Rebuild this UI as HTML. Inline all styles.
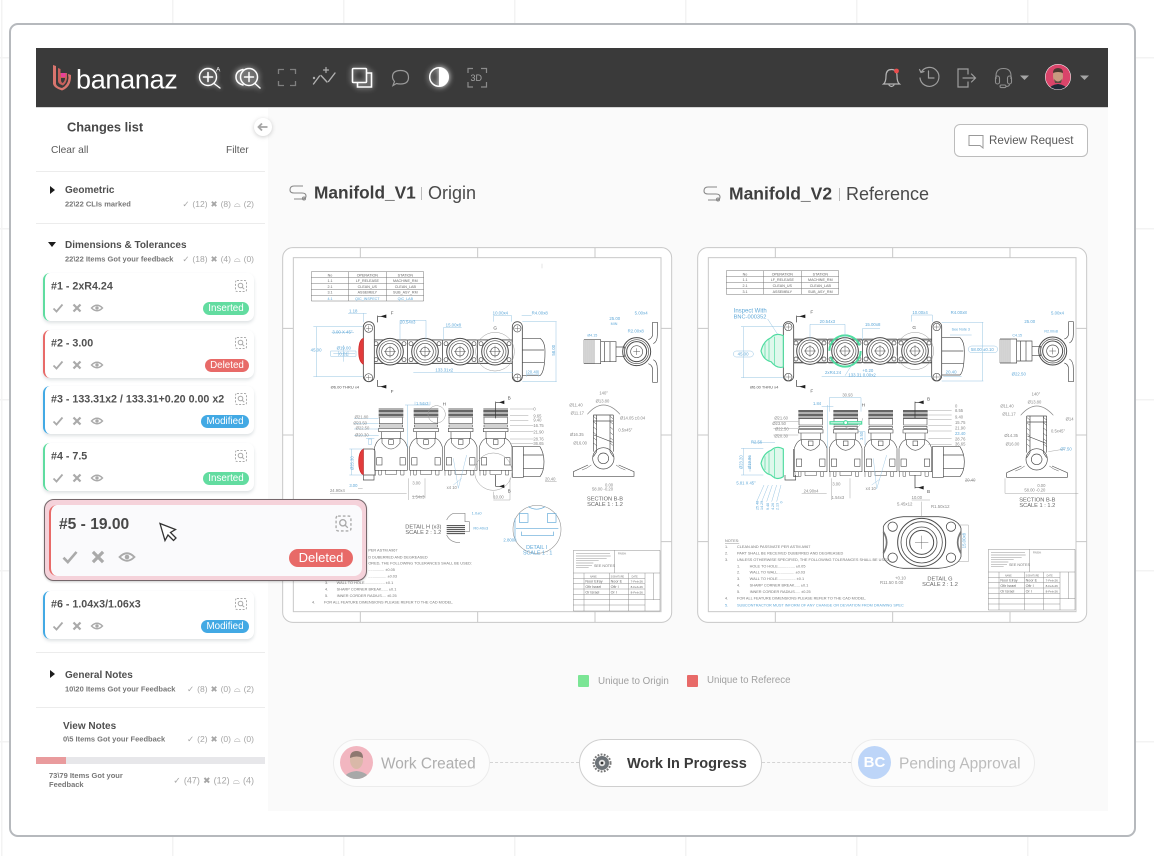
<!DOCTYPE html>
<html lang="en">
<head>
<meta charset="utf-8">
<title>bananaz</title>
<style>
*{box-sizing:border-box}
html,body{margin:0;padding:0}
body{width:1154px;height:856px;position:relative;overflow:hidden;font-family:"Liberation Sans",sans-serif;color:#3c3c3c;background-color:#fff}
.grid{position:absolute;inset:0;background-image:linear-gradient(90deg,#f3f3f3 1.5px,transparent 1.5px),linear-gradient(#f3f3f3 1.5px,transparent 1.5px);background-size:171px 171px;background-position:1px 57px}
.frame{position:absolute;left:9px;top:23px;width:1127px;height:814px;border:2px solid #b6b9bd;border-radius:9px;background:#fff}
.hdr{position:absolute;left:36px;top:48px;width:1072px;height:59px;background:#3a3a3a}
.main{position:absolute;left:36px;top:107px;width:1072px;height:704px;background:#fafafa;border-top:1px solid #d5d5d5}
.side{position:absolute;left:36px;top:108px;width:232px;height:703px;background:#fff}
.t{position:absolute;transform:translateY(-50%);white-space:nowrap;line-height:1}
.hr{position:absolute;left:36px;width:229px;height:1px;background:#ececec}
.h{font-size:10px;font-weight:bold;color:#4f4f4f;margin-top:1px}
.s{font-size:7.5px;font-weight:bold;color:#777}
.st{font-size:8.5px;color:#a6a6a6;text-align:right;word-spacing:.6px}
.tri{position:absolute;width:0;height:0}
.tri.r{border-left:5px solid #1c1c1c;border-top:4px solid transparent;border-bottom:4px solid transparent}
.tri.d{border-top:5px solid #1c1c1c;border-left:4.5px solid transparent;border-right:4.5px solid transparent}
.card{position:absolute;left:43px;width:211px;height:48px;background:#fff;border-left:2px solid;border-radius:7px;box-shadow:0 2px 3px rgba(90,110,120,.2)}
.card .n{position:absolute;left:6px;top:13.5px;transform:translateY(-50%);font-size:10.7px;font-weight:bold;color:#505050;white-space:nowrap;line-height:1}
.card svg{position:absolute;left:0;top:0}
.b{position:absolute;right:5px;top:29px;height:13px;border-radius:7px;color:#fff;font-size:9.8px;line-height:13px;text-align:center}
.g{border-color:#5fdca0}.g .b{background:#62dca0;width:46px}
.r{border-color:#e86a68}.r .b{background:#e86a68;width:44px}
.m{border-color:#42a9e4}.m .b{background:#42a9e4;width:48px}
.big{position:absolute;left:44px;top:499px;width:323px;height:82px;background:#f5d2da;border:1px solid #75676b;border-radius:10px;box-shadow:0 1px 2px rgba(0,0,0,.2)}
.big .in{position:absolute;left:4px;top:5px;width:313px;height:71px;background:#fafafc;border-left:2px solid #e86a68;border-radius:8px}
.pill{position:absolute;top:739px;height:48px;border-radius:24px;background:#fcfcfc;border:1px solid #ececec}
.dots{position:absolute;top:762px;height:0;border-top:1.5px dashed #d4d4d4}
.drawing{position:absolute;width:395px;height:380px;filter:blur(.3px)}
.drawing text{font-family:"Liberation Sans",sans-serif}
</style>
</head>
<body>
<div class="grid"></div>
<div class="frame"></div>
<div class="main"></div>
<div class="hdr"></div>
<div class="side"></div>

<svg width="0" height="0" style="position:absolute">
<defs>
<g id="port" fill="none" stroke="#4c4c4c" stroke-width="2">
<rect x="-52" y="-36" width="104" height="72" rx="4" stroke="#6c6c6c"/>
<circle cx="-42" cy="-24" r="6"/><circle cx="42" cy="-24" r="6"/><circle cx="-42" cy="24" r="6"/><circle cx="42" cy="24" r="6"/>
<circle r="40" fill="#fff" stroke-width="3"/><circle r="33"/><circle r="25"/><circle r="13"/>
<path d="M-18 0H18M0-18V18" stroke-width="1.4"/>
</g>
<g id="tower" fill="none" stroke="#4c4c4c" stroke-width="1.8">
<path d="M0 2H74M0 6H74M0 10H74M0 14H74M0 18H74M0 22H74M0 26H74" stroke="#333" stroke-width="2.2"/>
<path d="M2 28V46H72V28M2 50H72V56H2ZM0 60H74V70H0ZM8 70V90M66 70V90"/>
<path d="M-12 116Q-4 92 10 90H64Q78 92 86 116"/>
<path d="M10 90V104Q37 140 64 104V90"/>
<rect x="30" y="94" width="14" height="14"/>
<path d="M-12 116V186H86V116"/>
<rect x="-6" y="148" width="16" height="22"/><rect x="64" y="148" width="16" height="22"/>
<path d="M-10 186V202M0 186V200H8V186M20 186V198H54V186M66 186V200H76V186" stroke-width="1.5"/>
</g>
<g id="sec" fill="none" stroke="#4c4c4c" stroke-width="2">
<path d="M-48 38Q0 -18 50 38" stroke="#888"/>
<path d="M-30 40V150M30 40V150M-20 40V150M20 40V150M-30 40H30M-30 58H30M-28 100L28 122M-20 150L-30 165M20 150L30 165"/>
<path d="M-30 44L-20 52M-30 60L-20 68M-30 76L-20 84M-30 92L-20 100M-30 108L-20 116M-30 124L-20 132M20 44L30 52M20 60L30 68M20 76L30 84M20 92L30 100M20 108L30 116M20 124L30 132" stroke-width="1.4"/>
<circle cx="0" cy="170" r="32"/><circle cx="0" cy="170" r="16"/>
<path d="M-90 210V224H92V210L46 190M-90 210L-46 190"/>
<path d="M-64 205Q-48 200 -36 190M66 205Q50 200 38 190" stroke-width="1.4"/>
</g>
<g id="side" fill="none" stroke="#4c4c4c" stroke-width="2">
<path d="M-158 -36V36M-152 -36V36M-146 -36V36M-140 -36V36M-134 -36V36M-128 -36V36" stroke="#444" stroke-width="1.4"/>
<path d="M-158 -36H-108V36H-158M-108 -30H-62V30H-108M-96 -30V30M-80 -30V30M-62 -14H-36V14H-62"/>
<circle r="42" stroke-width="3"/><circle r="36"/><circle r="30" stroke-width="3"/><circle r="18"/>
<path d="M-10 0H10M0-10V10" stroke-width="1.4"/>
<path d="M35 -36Q48 -40 48 -54V-88H62V-50Q62 -30 50 -24M35 36Q48 40 48 56V92H62V52Q62 30 50 24"/>
</g>
<g id="tb" fill="none" stroke="#888" stroke-width="1.4">
<path d="M0 0H260V182H0ZM0 68H260M124 0V68M0 84H215M0 100H215M0 116H215M0 132H215M0 148H260M0 164H215M32 68V182M108 68V182M165 68V182M215 68V182M240 68V148"/>
<path d="M8 10H110M8 17H112M8 24H100M8 31H76M8 38H60M8 45H56M8 52H46" stroke="#aaa" stroke-width="2"/>
<text x="62" y="50" font-size="11" fill="#777" stroke="none">SEE NOTES</text>
<text x="134" y="12" font-size="7" fill="#777" stroke="none">FINISH:</text>
<text x="50" y="81" font-size="7" fill="#777" stroke="none">NAME</text>
<text x="112" y="81" font-size="7" fill="#777" stroke="none">SIGNATURE</text>
<text x="175" y="81" font-size="7" fill="#777" stroke="none">DATE</text>
<text x="36" y="97" font-size="11" fill="#666" stroke="none">Noor Elray</text>
<text x="112" y="97" font-size="11" fill="#666" stroke="none">Noor E</text>
<text x="172" y="97" font-size="9" fill="#666" stroke="none">7-Feb-26</text>
<text x="36" y="113" font-size="11" fill="#666" stroke="none">Ofir Israel</text>
<text x="112" y="113" font-size="11" fill="#666" stroke="none">Ofir I</text>
<text x="172" y="113" font-size="9" fill="#666" stroke="none">8-Feb-26</text>
<text x="36" y="129" font-size="11" fill="#666" stroke="none">Or Israel</text>
<text x="112" y="129" font-size="11" fill="#666" stroke="none">Or I</text>
<text x="172" y="129" font-size="9" fill="#666" stroke="none">8-Feb-26</text>
</g>
<g id="fr" fill="none" stroke="#c8c8c8">
<rect x="8" y="8" width="1167" height="1124" rx="30" fill="#fff" stroke-width="3"/>
<rect x="40" y="38" width="1103" height="1062" stroke-width="3"/>
<path d="M241 8V38M593 8V38M945 8V38M241 1100V1132M593 1100V1132M945 1100V1132M8 250H40M8 570H40M8 890H40M1143 250H1175M1143 570H1175M1143 890H1175" stroke-width="3"/>
</g>
<g id="chk"><path d="M-4.5 .5L-1.5 3.5L4.5-3.5" fill="none" stroke="#aaa" stroke-width="1.8"/></g>
<g id="cross"><path d="M-3.5-3.5L3.5 3.5M3.5-3.5L-3.5 3.5" fill="none" stroke="#aaa" stroke-width="2.2"/></g>
<g id="eye" fill="none" stroke="#aaa"><path d="M-5.5 0Q0-5.5 5.5 0Q0 5.5 -5.5 0Z" stroke-width="1.4"/><circle r="1.7" fill="#aaa" stroke="none"/></g>
<g id="sr" fill="none" stroke="#aaa"><rect x="-5.5" y="-5.5" width="11" height="11" rx="1.5" stroke-dasharray="2 1.5"/><circle cx="-.5" cy="-.5" r="2.3"/><path d="M1.2 1.2L3.2 3.2"/></g>
</defs>
</svg>

<!-- HEADER CONTENT -->
<svg style="position:absolute;left:0;top:0;filter:blur(.3px)" width="1154" height="110" viewBox="0 0 1154 110" fill="none">
<!-- logo -->
<path d="M53 65L56 66V84Q57 87 62 88Q68 85 68.5 78L68 74L71 75Q71.5 87 62 90.5Q54 88 53 84Z" fill="#d9756e"/>
<path d="M58 68L60.5 69V73H67V78Q66.5 83 63 85.5Q58 84 58 81Z" fill="#c9605c"/>
<rect x="61" y="73" width="4.5" height="4" fill="#e8409a"/>
<path d="M61 78H65V79Q64.5 81.5 62.5 83Q61 82 61 80Z" fill="#3a3a3a"/>
<!-- zoom A -->
<g stroke="#fff" stroke-width="1.4" stroke-linecap="round" style="filter:drop-shadow(0 0 2px rgba(255,255,255,.7))">
<circle cx="208" cy="77" r="8.5"/><path d="M203.5 77H212.5M208 72.5V81.5" stroke-width="1.6"/><path d="M214 83.5L220 88"/>
</g>
<text x="216" y="71.5" font-size="6.5" fill="#fff" font-family="Liberation Sans">A</text>
<!-- zoom double -->
<g stroke="#fff" stroke-width="1.5" stroke-linecap="round" style="filter:drop-shadow(0 0 3px #fff)">
<circle cx="249" cy="77" r="8.5"/><path d="M244.5 77H253.5M249 72.5V81.5"/><path d="M255 83.5L260 88"/>
<path d="M243 69.5Q236 71 236 77Q236 83 243 85"/>
</g>
<!-- fullscreen -->
<path d="M278.5 74V69.5H284M290 69.5H295.5V74M278.5 81V85.5H284M290 85.5H295.5V81" stroke="#808080" stroke-width="1.3"/>
<!-- graph -->
<g stroke="#b0b0b0" stroke-width="1.4" stroke-linecap="round">
<path d="M313.5 84L319.5 76M321 75.5L327 82M328.5 81.5L335 73"/>
<path d="M323.5 70H328.5M326 67.5V72.5" stroke-width="1.2"/>
<circle cx="314" cy="78" r=".5"/>
</g>
<!-- layers -->
<g stroke="#fff" stroke-width="1.6" style="filter:drop-shadow(0 0 3px rgba(255,255,255,.8))">
<rect x="352.5" y="68.5" width="14" height="14" rx="1"/>
<path d="M366.5 73H371.5V87H357.5V82.5"/>
</g>
<!-- bubble -->
<path d="M393 85.5L394.5 81.5Q392.5 79 392.5 77Q392.5 70.5 400.5 70.5Q408.5 70.5 408.5 77.5Q408.5 84 400.5 84Q398 84 396.5 83.5Z" stroke="#9a9a9a" stroke-width="1.2"/>
<!-- contrast -->
<g style="filter:drop-shadow(0 0 3px #fff)">
<circle cx="439" cy="77" r="9.3" stroke="#fff" stroke-width="1.5"/>
<path d="M439 67.7A9.3 9.3 0 0 1 439 86.3Z" fill="#fff"/>
</g>
<!-- 3D -->
<path d="M468 73V68.5H473M481 68.5H486.5V73M468 82V87H473M481 87H486.5V82" stroke="#8c8c8c" stroke-width="1.2"/>
<text x="470.5" y="81" font-size="9" fill="#a5a5a5" font-family="Liberation Sans">3D</text>
<!-- bell -->
<g stroke="#b5b5b5" stroke-width="1.2" stroke-linecap="round">
<path d="M883.5 84Q886 82 886 76Q886 69.5 891.5 69.5Q897 69.5 897 76Q897 82 899.5 84Z"/>
<path d="M889 85Q891.5 88 894 85"/>
</g>
<circle cx="896.5" cy="71" r="2.4" fill="#ea4c4c"/>
<!-- clock -->
<g stroke="#9e9e9e" stroke-width="1.2" stroke-linecap="round">
<path d="M921 72.5A9.5 9.5 0 1 1 920 78M919.5 69.5L921 72.5L924 71.5"/>
<path d="M928.5 71V78H934"/>
</g>
<!-- exit -->
<g stroke="#9e9e9e" stroke-width="1.2" stroke-linecap="round">
<path d="M968 74V69H958V87H968V82"/>
<path d="M963 78H975M971.5 74L975.5 78L971.5 82"/>
</g>
<!-- headset -->
<g stroke="#909090" stroke-width="1.1">
<path d="M996 79V76Q996 68.5 1003.5 68.5Q1011 68.5 1011 76V79"/>
<rect x="995.5" y="76" width="4" height="8" rx="2"/><rect x="1007.5" y="76" width="4" height="8" rx="2"/>
<path d="M1009.5 84Q1009.5 86.5 1006 86.5"/><rect x="1000" y="85" width="6" height="2.6" rx="1.3"/>
</g>
<path d="M1020 75.5H1029L1024.5 80Z" fill="#a5a5a5"/>
<!-- avatar -->
<defs><clipPath id="av"><circle cx="1058" cy="77" r="12.5"/></clipPath></defs>
<circle cx="1058" cy="77" r="13" fill="#fff"/>
<g clip-path="url(#av)">
<rect x="1044" y="63" width="28" height="28" fill="#d9446a"/>
<path d="M1048 92Q1049 85 1058 84Q1067 85 1068 92Z" fill="#1f2a38"/>
<ellipse cx="1058" cy="76" rx="5" ry="7" fill="#c99a80"/>
<path d="M1053 73Q1053 68 1058 68Q1063 68 1063 73Q1058 71 1053 73Z" fill="#4a3a32"/>
<path d="M1054 79Q1058 84 1062 79L1061 83H1055Z" fill="#5a4a42"/>
</g>
<path d="M1080 75.5H1089L1084.5 80Z" fill="#a5a5a5"/>
</svg>
<div class="t" style="left:76px;top:79.5px;font-size:27px;letter-spacing:-.3px;color:#fff">bananaz</div>

<!-- SIDEBAR -->
<div class="t" style="left:67px;top:128px;font-size:12.8px;font-weight:bold;color:#474747">Changes list</div>
<div class="t" style="left:51px;top:151px;font-size:10.2px;color:#5a5a5a">Clear all</div>
<div class="t" style="left:226px;top:151px;font-size:10.2px;color:#5a5a5a">Filter</div>
<svg style="position:absolute;left:252px;top:116px;overflow:visible" width="22" height="22">
<circle cx="11" cy="11" r="9" fill="#fff" style="filter:drop-shadow(0 1px 2px rgba(0,0,0,.2))"/>
<path d="M6.5 11H15.5M10 7.5L6.5 11L10 14.5" stroke="#a5a5a5" stroke-width="1.8" fill="none"/>
</svg>

<div class="hr" style="top:171px"></div>
<div class="tri r" style="left:50px;top:186px"></div>
<div class="t h" style="left:65px;top:190px">Geometric</div>
<div class="t s" style="left:65px;top:204px">22\22 CLIs marked</div>
<div class="t st" style="right:900px;top:204px">✓ (12) ✖ (8) ⌓ (2)</div>

<div class="hr" style="top:223px"></div>
<div class="tri d" style="left:48px;top:242px"></div>
<div class="t h" style="left:65px;top:245px">Dimensions &amp; Tolerances</div>
<div class="t s" style="left:65px;top:259px">22\22 Items Got your feedback</div>
<div class="t st" style="right:900px;top:259px">✓ (18) ✖ (4) ⌓ (0)</div>

<div class="card g" style="top:273px"><div class="n">#1 - 2xR4.24</div><svg width="209" height="48"><use href="#sr" x="196" y="13"/><use href="#chk" x="13" y="35"/><use href="#cross" x="32" y="35"/><use href="#eye" x="52" y="35"/></svg><div class="b">Inserted</div></div>
<div class="card r" style="top:330px"><div class="n">#2 - 3.00</div><svg width="209" height="48"><use href="#sr" x="196" y="13"/><use href="#chk" x="13" y="35"/><use href="#cross" x="32" y="35"/><use href="#eye" x="52" y="35"/></svg><div class="b">Deleted</div></div>
<div class="card m" style="top:386px"><div class="n">#3 - 133.31x2 / 133.31+0.20 0.00 x2</div><svg width="209" height="48"><use href="#sr" x="196" y="13"/><use href="#chk" x="13" y="35"/><use href="#cross" x="32" y="35"/><use href="#eye" x="52" y="35"/></svg><div class="b">Modified</div></div>
<div class="card g" style="top:443px"><div class="n">#4 - 7.5</div><svg width="209" height="48"><use href="#sr" x="196" y="13"/><use href="#chk" x="13" y="35"/><use href="#cross" x="32" y="35"/><use href="#eye" x="52" y="35"/></svg><div class="b">Inserted</div></div>
<div class="card m" style="top:591px"><div class="n">#6 - 1.04x3/1.06x3</div><svg width="209" height="48"><use href="#sr" x="196" y="13"/><use href="#chk" x="13" y="35"/><use href="#cross" x="32" y="35"/><use href="#eye" x="52" y="35"/></svg><div class="b">Modified</div></div>

<div class="hr" style="top:652px"></div>
<div class="tri r" style="left:50px;top:670px"></div>
<div class="t h" style="left:65px;top:675px">General Notes</div>
<div class="t s" style="left:65px;top:689px">10\20 Items Got your Feedback</div>
<div class="t st" style="right:900px;top:689px">✓ (8) ✖ (0) ⌓ (2)</div>
<div class="hr" style="top:707px"></div>
<div class="t h" style="left:63px;top:726px">View Notes</div>
<div class="t s" style="left:63px;top:739px">0\5 Items Got your Feedback</div>
<div class="t st" style="right:900px;top:739px">✓ (2) ✖ (0) ⌓ (0)</div>
<div style="position:absolute;left:36px;top:757px;width:229px;height:7px;background:#e7e7ea"></div>
<div style="position:absolute;left:36px;top:757px;width:30px;height:7px;background:#e99b9d"></div>
<div class="s" style="position:absolute;left:49px;top:771px;width:90px;line-height:9px">73\79 Items Got your Feedback</div>
<div class="t st" style="right:900px;top:781px;font-size:9px">✓ (47) ✖ (12) ⌓ (4)</div>

<!-- TITLES -->
<svg style="position:absolute;left:0;top:0" width="1154" height="230" fill="none" stroke="#888" stroke-width="1.1">
<path d="M303 186H294Q290 186 290 190Q290 193 294 193H302Q306 193 306 196Q306 199 302 199H294"/><circle cx="304" cy="198.5" r="1.5"/>
<path d="M717 187H708Q704 187 704 191Q704 194 708 194H716Q720 194 720 197Q720 200 716 200H708"/><circle cx="718" cy="199.5" r="1.5"/>
</svg>
<div class="t" style="left:314px;top:193px;font-size:17.3px;font-weight:bold;color:#3f3f3f">Manifold_V1</div>
<div style="position:absolute;left:421px;top:187px;width:1px;height:13px;background:#bbb"></div>
<div class="t" style="left:428px;top:193px;font-size:18px;color:#4a4a4a">Origin</div>
<div class="t" style="left:729px;top:194px;font-size:17.5px;font-weight:bold;color:#3f3f3f">Manifold_V2</div>
<div style="position:absolute;left:839px;top:188px;width:1px;height:13px;background:#bbb"></div>
<div class="t" style="left:846px;top:194px;font-size:18px;color:#4a4a4a">Reference</div>

<!-- Review button -->
<div style="position:absolute;left:954px;top:124px;width:134px;height:33px;background:#fff;border:1px solid #bcbcbc;border-radius:6px"></div>
<svg style="position:absolute;left:968px;top:134px" width="17" height="15" fill="none"><path d="M1 1.5H15V14L12 11.5H1Z" stroke="#9a9a9a" stroke-width="1"/></svg>
<div class="t" style="left:989px;top:141px;font-size:11.6px;color:#5a5a5a">Review Request</div>

<!-- DRAWING 1 -->
<svg class="drawing" style="left:280px;top:245px" viewBox="0 0 1185 1140">
<use href="#fr"/>
<g fill="none" stroke="#777" stroke-width="1.5">
<path d="M94 80H431V168H94ZM94 98H431M94 116H431M94 133H431M94 151H431M205 80V168M320 80V168"/>
<path d="M786 56V70" stroke="#ccc"/>
</g>
<g font-size="11" fill="#666" text-anchor="middle">
<text x="150" y="94">No</text><text x="262" y="94">OPERATION</text><text x="376" y="94">STATION</text>
<text x="150" y="111">1.1</text><text x="262" y="111">LF_RELEASE</text><text x="376" y="111">MACHINE_RM</text>
<text x="150" y="129">2.1</text><text x="262" y="129">CLEAN_US</text><text x="376" y="129">CLEAN_LAB</text>
<text x="150" y="146">3.1</text><text x="262" y="146">ASSEMBLY</text><text x="376" y="146">SUB_ASY_RM</text>
<g fill="#5fa8d8"><text x="150" y="165">4.1</text><text x="262" y="165">QIC_INSPECT</text><text x="376" y="165">QIC_LAB</text></g>
</g>
<!-- top view -->
<g fill="none" stroke="#4c4c4c" stroke-width="2">
<path d="M283 285H697M283 355H697" stroke-width="2.5"/>
<use href="#port" x="330" y="320"/><use href="#port" x="435" y="320"/><use href="#port" x="540" y="320"/><use href="#port" x="645" y="320"/>
<rect x="250" y="230" width="33" height="180" rx="16" stroke-width="2.5" fill="#fff"/>
<circle cx="266" cy="250" r="12"/><circle cx="266" cy="398" r="12"/><path d="M258 250H274M266 242V258M258 398H274M266 390V406" stroke-width="1.2"/>
<rect x="697" y="230" width="30" height="180" rx="15" stroke-width="2.5" fill="#fff"/>
<circle cx="712" cy="250" r="11"/><circle cx="712" cy="398" r="11"/><path d="M704 250H720M712 242V258M704 398H720M712 390V406" stroke-width="1.2"/>
<path d="M727 280H780Q795 290 795 320Q795 380 780 392H727M727 315H792M727 352H792"/>
<circle cx="645" cy="320" r="58" stroke="#999" stroke-width="1.5"/>
<path d="M250 280Q236 285 236 320Q236 350 250 358Z" fill="#e23b3b" stroke="#c22" />
<!-- section arrows -->
<path d="M293 212V232M293 214H318M293 425H318M293 425V405" stroke="#333"/>
<path d="M318 210L304 214L318 218ZM318 421L304 425L318 429Z" fill="#222" stroke="#222"/>
</g>
<g fill="none" stroke="#8fbfe0" stroke-width="1.4">
<path d="M110 245V395M100 245H248M100 395H248M204 205H260M250 205V232M155 262H222M160 325H225M190 300V350M152 318H228V334H152ZM176 318V334M204 318V334M360 226H438M360 226V285M438 226V285M490 248H545M490 248V285M640 212H695M640 212V230M695 212V230M727 230H830M727 410H830M828 230V410M400 382H700M740 388H775M740 376V395M775 376V395M725 212H755"/>
</g>
<g font-size="13" fill="#5fa8d8">
<text x="92" y="319">45.00</text><text x="207" y="203">1.18</text><text x="157" y="266">3.00 X 45°</text>
<text x="170" y="313">Ø19.00</text><text x="178" y="331">0.01</text><text x="360" y="236">20.54x3</text>
<text x="497" y="245">15.00x8</text><text x="638" y="209">10.00x4</text><text x="755" y="208">R4.00x8</text>
<text transform="translate(825 332) rotate(-90)">58.00</text><text x="466" y="379">133.31x2</text><text x="742" y="386">20.40</text>
</g>
<g font-size="14" fill="#555">
<text x="332" y="208">F</text><text x="332" y="444">F</text><text x="640" y="254">G</text><text x="152" y="431" font-size="12">Ø6.00 THRU x4</text>
</g>
<!-- side -->
<use href="#side" x="1070" y="320"/>
<g font-size="13" fill="#5fa8d8"><text x="988" y="225">25.00</text><text x="992" y="240" font-size="11">MIN</text><text x="1043" y="263">R2.00x8</text><text x="922" y="274" font-size="11">Ø4.15</text><text x="1064" y="208">5.00x4</text></g>
<!-- front view -->
<use href="#tower" x="296" y="490"/><use href="#tower" x="401" y="490"/><use href="#tower" x="505" y="490"/><use href="#tower" x="610" y="490"/>
<g fill="none" stroke="#4c4c4c" stroke-width="2">
<path d="M250 612H278Q285 612 285 620V690H250ZM697 605H730V697H697ZM730 605H780Q792 625 792 650Q792 680 780 695H730M730 630H790M730 670H790"/>
<path d="M250 612Q236 620 236 650Q236 682 250 690Z" fill="#e23b3b" stroke="#c22"/>
<path d="M250 690V705H282V690"/>
<circle cx="470" cy="508" r="26" stroke="#999" stroke-width="1.5"/><circle cx="640" cy="680" r="56" stroke="#999" stroke-width="1.5"/>
<path d="M647 470V520M647 725V690M647 472H672M647 724H672" stroke="#333"/>
<path d="M672 468L660 472L672 476ZM672 720L660 724L672 728Z" fill="#222" stroke="#222"/>
</g>
<g fill="none" stroke="#8fbfe0" stroke-width="1.4"><path d="M375 480H450M383 480V610M405 470V480M450 470V480M258 580H283M265 582H275V598H265ZM222 520H296M222 536H296M222 552H296M222 572H296M215 612V690M208 612H250M208 690H250"/></g>
<g fill="none" stroke="#999" stroke-width="1.3"><path d="M690 492H760M690 512H745M690 526H745M690 541H760M690 560H760M690 582H760M690 596H760M385 700V765M435 760V700M396 755H435M150 745H380M248 730H234M640 765H690M640 760V740M690 765V700M795 710H830"/></g>
<g font-size="12.5" fill="#888">
<text x="224" y="520">Ø21.80</text><text x="220" y="538">Ø23.50</text><text x="227" y="554">Ø22.50</text><text x="225" y="574">Ø20.30</text>
<text x="408" y="480" fill="#5fa8d8">1.54x3</text><text x="488" y="482" font-size="14" fill="#555">H</text>
<text x="760" y="497">0</text><text x="760" y="517">9.65</text><text x="760" y="530">9.40</text><text x="760" y="546">16.75</text><text x="760" y="565">21.90</text><text x="760" y="586">28.76</text><text x="760" y="600">36.65</text>
<text x="683" y="463" font-size="14" fill="#555">B</text><text x="683" y="742" font-size="14" fill="#555">B</text>
<text x="150" y="741">24.90x4</text><text x="208" y="726" fill="#5fa8d8">3.00</text><text x="397" y="719">3.00</text><text x="396" y="761">1.54x3</text><text x="640" y="761">10.00</text><text x="795" y="707">20.40</text><text x="500" y="732">x4 10</text>
<text transform="translate(220 675) rotate(-90)" fill="#5fa8d8">Ø25.30</text>
</g>
<path d="M520 640L535 730M560 630L535 730M520 720L545 700" fill="none" stroke="#8fbfe0" stroke-width="1.2"/>
<!-- section -->
<use href="#sec" x="970" y="470"/>
<g font-size="12.5" fill="#888"><text x="958" y="448">140°</text><text x="868" y="484">Ø11.40</text><text x="872" y="508">Ø11.17</text><text x="947" y="473">Ø13.80</text><text x="1020" y="524">Ø14.05 ±0.04</text><text x="1015" y="560">0.5x45°</text><text x="870" y="573">Ø16.35</text><text x="880" y="599">Ø16.00</text><text x="975" y="724">0.00</text><text x="936" y="736">58.00 -0.20</text></g>
<g font-size="17" fill="#666" text-anchor="middle"><text x="975" y="767">SECTION B-B</text><text x="975" y="783">SCALE 1 : 1.2</text>
<text x="430" y="851">DETAIL H (x3)</text><text x="430" y="867">SCALE 2 : 1.2</text></g>
<!-- detail H -->
<g fill="none" stroke="#555" stroke-width="2"><path d="M500 842H555M500 848H555M500 854H555M500 860H555M500 866H555" stroke="#444" stroke-width="3"/><path d="M525 805H555V830H568V860H555M500 825Q510 805 525 805M500 870Q510 893 540 893" stroke="#888"/></g>
<g font-size="12" fill="#5fa8d8"><text x="575" y="808">1.0±0</text><text x="580" y="853">R0.40x3</text></g>
<!-- detail I -->
<g fill="none" stroke="#5fa8d8" stroke-width="2"><circle cx="771" cy="853" r="72" stroke="#888" stroke-width="1.6"/><rect x="718" y="806" width="26" height="26"/><rect x="802" y="806" width="26" height="26"/><path d="M708 850H835M725 860V872H820V860M705 820V880M745 785Q770 800 795 785"/></g>
<text x="670" y="889" font-size="13" fill="#5fa8d8">2.8008</text>
<g font-size="16" fill="#5fa8d8" text-anchor="middle"><text x="770" y="912">DETAIL I</text><text x="773" y="928">SCALE 1 : 1</text></g>
<!-- notes -->
<g font-size="11.5" fill="#777"><text x="265" y="920">PER ASTM A967</text><text x="265" y="940">D DUBERRED AND DEGREASED</text><text x="265" y="959">ORED, THE FOLLOWING TOLERANCES SHALL BE USED:</text><text x="265" y="978">............... ±0.05</text><text x="265" y="998">................. ±0.03</text>
<text x="135" y="1017">3.</text><text x="170" y="1017">WALL TO HOLE................... ±0.1</text>
<text x="135" y="1036">4.</text><text x="170" y="1036">SHARP CORNER BREAK...... ±0.1</text>
<text x="135" y="1056">5.</text><text x="170" y="1056">INNER CORDER RADIUS.... ±0.25</text>
<text x="96" y="1075">4.</text><text x="132" y="1075">FOR ALL FEATURE DIMENSIONS PLEASE REFER TO THE CAD MODEL.</text></g>
<use href="#tb" x="880" y="916"/>
</svg>

<!-- DRAWING 2 -->
<svg class="drawing" style="left:695px;top:245px" viewBox="0 0 1185 1140">
<use href="#fr"/>
<g fill="none" stroke="#777" stroke-width="1.5"><path d="M94 77H431V148H94ZM94 95H431M94 113H431M94 131H431M205 77V148M320 77V148"/></g>
<g font-size="11" fill="#666" text-anchor="middle">
<text x="150" y="91">No</text><text x="262" y="91">OPERATION</text><text x="376" y="91">STATION</text>
<text x="150" y="108">1.1</text><text x="262" y="108">LF_RELEASE</text><text x="376" y="108">MACHINE_RM</text>
<text x="150" y="126">2.1</text><text x="262" y="126">CLEAN_US</text><text x="376" y="126">CLEAN_LAB</text>
<text x="150" y="144">3.1</text><text x="262" y="144">ASSEMBLY</text><text x="376" y="144">SUB_ASY_RM</text>
</g>
<g fill="none" stroke="#4c4c4c" stroke-width="2">
<path d="M296 285H712M296 352H712" stroke-width="2.5"/>
<use href="#port" x="345" y="318"/><use href="#port" x="450" y="318"/><use href="#port" x="555" y="318"/><use href="#port" x="660" y="318"/>
<circle cx="450" cy="318" r="47" stroke="#4fdca0" stroke-width="6" stroke-dasharray="130 18"/>
<rect x="265" y="230" width="31" height="178" rx="15" stroke-width="2.5" fill="#fff"/>
<circle cx="280" cy="246" r="11"/><circle cx="280" cy="396" r="11"/><path d="M272 246H288M280 238V254M272 396H288M280 388V404" stroke-width="1.2"/>
<rect x="710" y="230" width="30" height="178" rx="15" stroke-width="2.5" fill="#fff"/>
<circle cx="725" cy="246" r="11"/><circle cx="725" cy="396" r="11"/><path d="M717 246H733M725 238V254M717 396H733M725 388V404" stroke-width="1.2"/>
<path d="M740 278H795Q808 290 808 318Q808 378 795 390H740M740 318H805M740 355H805"/>
<circle cx="660" cy="318" r="56" stroke="#999" stroke-width="1.5"/>
<path d="M305 212V232M305 214H330M305 425H330M305 425V405" stroke="#333"/>
<path d="M330 210L316 214L330 218ZM330 421L316 425L330 429Z" fill="#222" stroke="#222"/>
</g>
<!-- green top -->
<g fill="#dff8ec" stroke="#4fdca0" stroke-width="3.5"><path d="M265 272Q242 262 228 278Q205 288 198 318Q205 345 228 350Q245 372 265 366Z"/><path d="M238 275V360M222 282V350M210 295V340" fill="none" stroke-width="2"/></g>
<g fill="none" stroke="#8fbfe0" stroke-width="1.4"><path d="M145 245V398M138 245H265M138 398H265M218 222L248 268M345 238H450M345 238V285M450 238V285M503 250H555M503 250V285M650 210H712M650 210V230M712 210V230M740 232H865M740 408H865M863 232V408M450 392L470 360M380 395H710M745 395H800M765 270H830"/><rect x="115" y="318" width="60" height="18" rx="9"/><rect x="820" y="303" width="88" height="20" rx="10"/></g>
<g font-size="13" fill="#5fa8d8">
<text x="116" y="203" font-size="18">Inspect With</text><text x="116" y="220" font-size="17">BNC-000352</text>
<text x="128" y="332">45.00</text><text x="374" y="234">20.54x3</text><text x="510" y="243">15.00x8</text><text x="652" y="207">10.00x4</text><text x="767" y="207">R4.00x8</text>
<text x="770" y="256" font-size="11">See Note 3</text><text x="828" y="318">58.00 ±0.10</text><text x="390" y="387">2xR4.24</text><text x="502" y="381">+0.20</text><text x="460" y="394">133.31  0.00x2</text><text x="752" y="385">20.40</text>
<text x="952" y="274" font-size="11">C4.15</text><text x="988" y="234">25.00</text><text x="1048" y="263" font-size="11">R2.00x8</text><text x="1068" y="208">5.00x4</text><text x="950" y="392">Ø22.50</text>
</g>
<g font-size="14" fill="#555"><text x="346" y="205">F</text><text x="346" y="442">F</text><text x="652" y="252">G</text><text x="165" y="430" font-size="12">Ø6.00 THRU x4</text></g>
<use href="#side" x="1073" y="318"/>
<!-- front -->
<use href="#tower" x="310" y="494"/><use href="#tower" x="415" y="494"/><use href="#tower" x="520" y="494"/><use href="#tower" x="624" y="494"/>
<g fill="none" stroke="#4c4c4c" stroke-width="2"><path d="M296 612V695H310M712 605H745V697H712ZM745 605H795Q808 625 808 650Q808 680 795 695H745M745 630H805M745 670H805"/><path d="M270 690V705H302V690"/><path d="M660 470V520M660 730V690M660 472H685M660 728H685" stroke="#333"/><path d="M685 468L672 472L685 476ZM685 724L672 728L685 732Z" fill="#222" stroke="#222"/><circle cx="470" cy="520" r="32" stroke="#999" stroke-width="1.5" stroke-dasharray="70 130"/></g>
<g fill="#dff8ec" stroke="#4fdca0" stroke-width="3.5"><path d="M265 612Q245 600 228 616Q205 625 198 655Q205 685 228 690Q245 708 265 695Z"/><path d="M238 612V700M222 622V688M210 634V675" fill="none" stroke-width="2"/><path d="M405 530H500V537H405Z"/><circle cx="452" cy="533" r="6" fill="#fff"/></g>
<g fill="none" stroke="#8fbfe0" stroke-width="1.4"><path d="M403 458H498M403 458V500M498 458V500M380 484H415M398 480V610M145 610V690M138 610H205M138 690H205M165 630V680M170 592H240M207 720L185 770M220 720L200 770M232 720L215 770M245 720L230 770M258 720L245 770M490 560H510V600"/></g>
<g fill="none" stroke="#999" stroke-width="1.3"><path d="M700 497H770M700 510H770M700 524H770M700 541H770M700 558H770M700 581H770M700 598H770M410 700V765M465 760V700M320 745H395M650 765H705M810 706H840M235 530H310M235 550H310M235 570H310M930 700V745H1150M1060 620L1110 612"/></g>
<g font-size="12.5" fill="#888">
<text x="238" y="523">Ø21.60</text><text x="232" y="540">Ø23.50</text><text x="240" y="556">Ø22.50</text><text x="238" y="577">Ø20.30</text>
<text x="442" y="454">30.93</text><text x="354" y="480" fill="#5fa8d8">1.84</text><text x="500" y="485" font-size="14" fill="#555">H</text>
<text x="780" y="488">0</text><text x="780" y="501">8.55</text><text x="780" y="520">9.40</text><text x="780" y="537">15.75</text><text x="780" y="554">21.90</text><text x="780" y="570" fill="#5fa8d8">23.40</text><text x="780" y="586">28.76</text><text x="780" y="601">36.65</text>
<text x="696" y="466" font-size="14" fill="#555">B</text><text x="696" y="744" font-size="14" fill="#555">B</text>
<text x="326" y="743">24.90x4</text><text x="412" y="721">3.00</text><text x="410" y="762">1.54x3</text><text x="650" y="762">10.00</text><text x="810" y="710">20.40</text><text x="512" y="735">x4 10</text>
<g fill="#5fa8d8"><text x="168" y="595">R2.56</text><text x="124" y="718">5.81 X 45°</text><text transform="translate(143 672) rotate(-90)">Ø23.20</text><text transform="translate(168 672) rotate(-90)">Ø19.96</text>
<text transform="translate(190 795) rotate(-90)" font-size="11">25.48</text><text transform="translate(204 795) rotate(-90)" font-size="11">14.29</text><text transform="translate(222 795) rotate(-90)" font-size="11">9.48</text><text transform="translate(237 795) rotate(-90)" font-size="11">4.26</text><text transform="translate(250 795) rotate(-90)" font-size="11">2.13</text><text transform="translate(263 775) rotate(-90)" font-size="11">0</text><text transform="translate(504 585) rotate(-90)">3.50</text></g>
</g>
<path d="M535 640L545 732M575 630L545 732M530 720L555 702" fill="none" stroke="#8fbfe0" stroke-width="1.2"/>
<use href="#sec" x="1025" y="473"/>
<g font-size="12.5" fill="#888"><text x="1010" y="451">140°</text><text x="916" y="487">Ø11.40</text><text x="922" y="511">Ø11.17</text><text x="998" y="476">Ø13.80</text><text x="1112" y="526">Ø14</text><text x="1068" y="563">0.5x45°</text><text x="928" y="576">Ø14.35</text><text x="932" y="602">Ø16.00</text><text x="1096" y="616" fill="#5fa8d8">Ø7.50</text><text x="1027" y="726">0.00</text><text x="988" y="739">58.00 -0.20</text></g>
<g font-size="17" fill="#666" text-anchor="middle"><text x="1027" y="770">SECTION B-B</text><text x="1027" y="786">SCALE 1 : 1.2</text><text x="735" y="1007">DETAIL G</text><text x="735" y="1023">SCALE 2 : 1.2</text></g>
<!-- detail G -->
<g fill="none" stroke="#4c4c4c" stroke-width="2.4">
<path d="M565 845Q575 820 625 815H730Q790 820 798 850V935Q790 965 730 970H625Q575 965 565 935Z"/>
<circle cx="680" cy="892" r="72" stroke-width="3"/><circle cx="680" cy="892" r="62"/><circle cx="680" cy="892" r="46"/><circle cx="680" cy="892" r="36" stroke-width="3"/>
<circle cx="593" cy="845" r="14"/><circle cx="768" cy="845" r="14"/><circle cx="593" cy="938" r="14"/><circle cx="768" cy="938" r="14"/>
<path d="M565 860Q585 892 565 925M798 860Q778 892 798 925" stroke-width="5" stroke="#777"/>
<path d="M660 892H700M680 872V912" stroke-width="1.2"/>
<path d="M680 770V815M790 840H820V950H790" stroke="#999" stroke-width="1.3"/>
</g>
<g font-size="13" fill="#888"><text x="606" y="781">5.45x12</text><text x="708" y="789">R1.50x12</text><text transform="translate(812 910) rotate(-90)" fill="#5fa8d8">15.00x8</text><text x="600" y="1003">+0.10</text><text x="555" y="1017">R11.50  0.00</text></g>
<!-- notes -->
<g font-size="11.5" fill="#777">
<text x="90" y="891" text-decoration="underline">NOTES:</text>
<text x="90" y="909">1.</text><text x="126" y="909">CLEAN AND PASSIVATE PER ASTM A967</text>
<text x="90" y="929">2.</text><text x="126" y="929">PART SHALL BE RECEIVED DUBERRED AND DEGREASED</text>
<text x="90" y="948">3.</text><text x="126" y="948">UNLESS OTHERWISE SPECIFIED, THE FOLLOWING TOLERANCES SHALL BE USED:</text>
<text x="126" y="967">1.</text><text x="164" y="967">HOLE TO HOLE................ ±0.05</text>
<text x="126" y="986">2.</text><text x="164" y="986">WALL TO WALL................ ±0.03</text>
<text x="126" y="1005">3.</text><text x="164" y="1005">WALL TO HOLE................. ±0.1</text>
<text x="126" y="1025">4.</text><text x="164" y="1025">SHARP CORNER BREAK..... ±0.1</text>
<text x="126" y="1044">5.</text><text x="164" y="1044">INNER CORDER RADIUS..... ±0.25</text>
<text x="90" y="1064">4.</text><text x="126" y="1064">FOR ALL FEATURE DIMENSIONS PLEASE REFER TO THE CAD MODEL.</text>
<g fill="#5fa8d8"><text x="90" y="1084">5.</text><text x="126" y="1084">SUBCONTRACTOR MUST INFORM OF ANY CHANGE OR DEVIATION FROM DRAWING SPEC</text></g>
</g>
<use href="#tb" x="880" y="913"/>
</svg>

<!-- BIG CARD (over drawing) -->
<div class="big"><div class="in">
<div class="t" style="left:8px;top:19.5px;font-size:15.6px;font-weight:bold;color:#484848">#5 - 19.00</div>
<div style="position:absolute;right:9px;top:44px;width:64px;height:18px;border-radius:9px;background:#e86a68;color:#fff;font-size:13px;line-height:18px;text-align:center">Deleted</div>
</div></div>
<svg style="position:absolute;left:44px;top:499px" width="323" height="82">
<use href="#chk" transform="translate(26 58) scale(1.45)"/>
<use href="#cross" transform="translate(54 58) scale(1.45)"/>
<use href="#eye" transform="translate(83 58) scale(1.35)"/>
<use href="#sr" transform="translate(299.5 24.5) scale(1.35)"/>
<path d="M116 24.5L121 41.5L124 36L129.5 41.5L132 39L126.5 33.5L131.5 30.5Z" fill="#fff" stroke="#333" stroke-width="1.3"/>
</svg>

<!-- LEGEND -->
<div style="position:absolute;left:578px;top:675px;width:11px;height:12px;border-radius:1px;background:#7be595"></div>
<div class="t" style="left:598px;top:682px;font-size:9.8px;color:#a0a0a0">Unique to Origin</div>
<div style="position:absolute;left:687px;top:675px;width:11px;height:12px;border-radius:1px;background:#e86a68"></div>
<div class="t" style="left:707px;top:681px;font-size:9.7px;color:#a0a0a0">Unique to Referece</div>

<!-- STEPPER -->
<div class="dots" style="left:490px;width:89px"></div>
<div class="dots" style="left:762px;width:89px"></div>
<div class="pill" style="left:333px;width:157px"></div>
<div class="pill" style="left:579px;width:183px;background:#fff;border-color:#cfcfcf"></div>
<div class="pill" style="left:851px;width:184px"></div>
<svg style="position:absolute;left:340px;top:746px" width="34" height="34">
<defs><clipPath id="av2"><circle cx="16.5" cy="16.5" r="16.5"/></clipPath></defs>
<g clip-path="url(#av2)"><rect width="34" height="34" fill="#f2b6c0"/>
<path d="M3 34Q5 26 16.5 25Q28 26 30 34Z" fill="#a8a8a8"/>
<ellipse cx="16.5" cy="14" rx="6.5" ry="9" fill="#d9b8a8"/>
<path d="M10 12Q10 5 16.5 5Q23 5 23 12Q17 9 10 12Z" fill="#8e7870"/></g>
</svg>
<div class="t" style="left:381px;top:763.5px;font-size:15.4px;color:#aeaeae">Work Created</div>
<svg style="position:absolute;left:592px;top:752px" width="20" height="22">
<circle cx="10" cy="11" r="7" fill="#6d7378"/>
<circle cx="10" cy="11" r="8.5" fill="none" stroke="#777" stroke-width="2" stroke-dasharray="1.8 1.4"/>
<circle cx="10" cy="11" r="3.2" fill="#e6e6e6"/><circle cx="10" cy="11" r="1.4" fill="#333"/>
</svg>
<div class="t" style="left:627px;top:763.5px;font-size:14.5px;font-weight:bold;color:#3a3a3a">Work In Progress</div>
<div style="position:absolute;left:858px;top:746px;width:33px;height:33px;border-radius:50%;background:#bdd5f8;color:#fff;font-size:15px;font-weight:bold;line-height:33px;text-align:center">BC</div>
<div class="t" style="left:899px;top:763.5px;font-size:15.5px;color:#bcbcbc">Pending Approval</div>
</body>
</html>
